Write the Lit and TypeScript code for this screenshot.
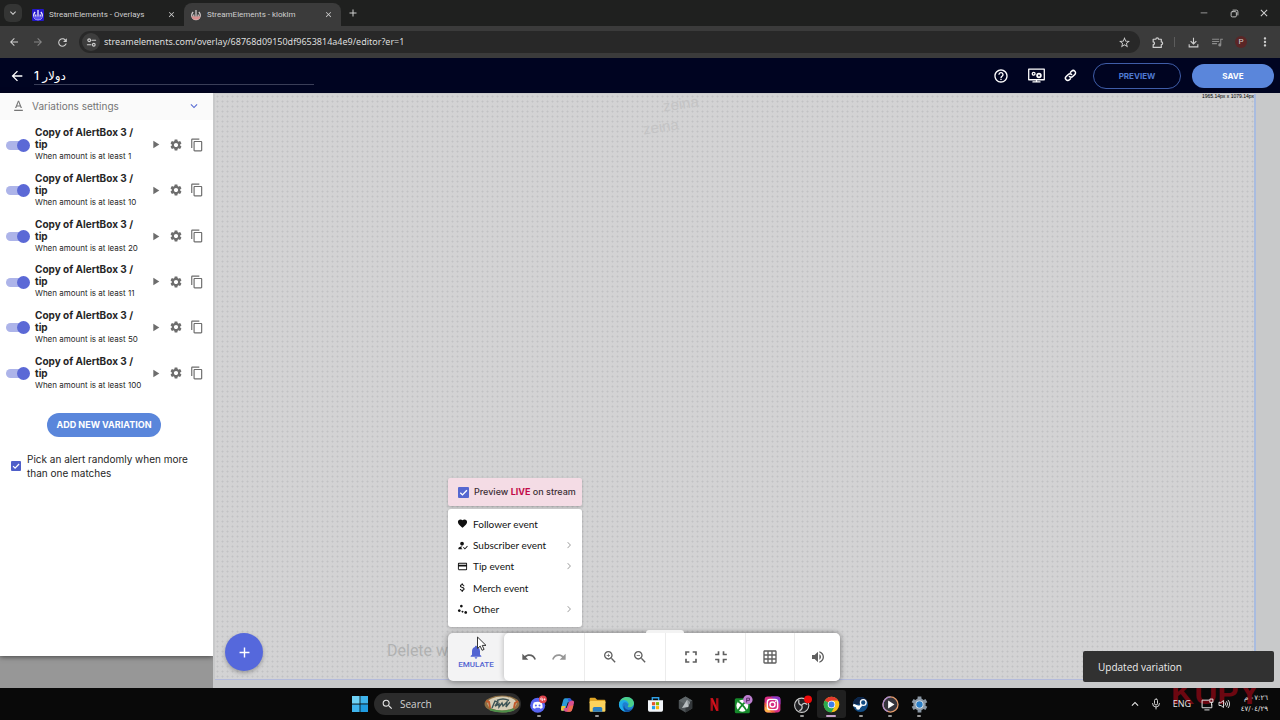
import { LitElement, html, css, svg, nothing } from "lit";
import { customElement, state } from "lit/decorators.js";

const PATHS: Record<string, string> = {
  back: "M20 11H7.83l5.59-5.59L12 4l-8 8 8 8 1.41-1.41L7.83 13H20v-2z",
  forward: "M12 4l-1.41 1.41L16.17 11H4v2h12.17l-5.58 5.59L12 20l8-8z",
  reload:
    "M17.65 6.35C16.2 4.9 14.21 4 12 4c-4.42 0-7.99 3.58-7.99 8s3.57 8 7.99 8c3.73 0 6.84-2.55 7.73-6h-2.08c-.82 2.33-3.04 4-5.65 4-3.31 0-6-2.69-6-6s2.69-6 6-6c1.66 0 3.14.69 4.22 1.78L13 11h7V4l-2.35 2.35z",
  close: "M19 6.41L17.59 5 12 10.59 6.41 5 5 6.41 10.59 12 5 17.59 6.41 19 12 13.41 17.59 19 19 17.59 13.41 12z",
  plus: "M19 13h-6v6h-2v-6H5v-2h6V5h2v6h6v2z",
  chevronDown: "M7.41 8.59L12 13.17l4.59-4.58L18 10l-6 6-6-6 1.41-1.41z",
  chevronUp: "M7.41 15.41L12 10.83l4.59 4.58L18 14l-6-6-6 6z",
  chevronRight: "M9.2 4.500l-1.200 1.200 6.300 6.300-6.300 6.300 1.200 1.200 7.500-7.500z",
  star: "M22 9.24l-7.19-.62L12 2 9.19 8.63 2 9.24l5.46 4.73L5.82 21 12 17.27 18.18 21l-1.63-7.03L22 9.24zM12 15.4l-3.76 2.27 1-4.28-3.32-2.88 4.38-.38L12 6.1l1.71 4.04 4.38.38-3.32 2.88 1 4.28L12 15.4z",
  more: "M12 8c1.1 0 2-.9 2-2s-.9-2-2-2-2 .9-2 2 .9 2 2 2zm0 2c-1.1 0-2 .9-2 2s.9 2 2 2 2-.9 2-2-.9-2-2-2zm0 6c-1.1 0-2 .9-2 2s.9 2 2 2 2-.9 2-2-.9-2-2-2z",
  queue: "M2 5h13v2H2zM2 9h13v2H2zM2 13h9v2H2zM17 5h5v2h-3v9.5a2.8 2.8 0 1 1-2-2.7z",
  download: "M11 3h2v9.2l3.6-3.6L18 10l-6 6-6-6 1.4-1.4 3.6 3.6zM3 15h2v4h14v-4h2v6H3z",
  help: "M11 18h2v-2h-2v2zm1-16C6.48 2 2 6.48 2 12s4.48 10 10 10 10-4.48 10-10S17.52 2 12 2zm0 18c-4.41 0-8-3.59-8-8s3.59-8 8-8 8 3.59 8 8-3.59 8-8 8zm0-14c-2.21 0-4 1.79-4 4h2c0-1.1.9-2 2-2s2 .9 2 2c0 2-3 1.75-3 5h2c0-2.25 3-2.5 3-5 0-2.21-1.79-4-4-4z",
  play: "M8 5v14l11-7z",
  gear: "M19.14 12.94c.04-.3.06-.61.06-.94s-.02-.64-.07-.94l2.03-1.58c.18-.14.23-.41.12-.61l-1.92-3.32c-.12-.22-.37-.29-.59-.22l-2.39.96c-.5-.38-1.03-.7-1.62-.94l-.36-2.54c-.04-.24-.24-.41-.48-.41h-3.84c-.24 0-.43.17-.47.41l-.36 2.54c-.59.24-1.13.57-1.62.94l-2.39-.96c-.22-.08-.47 0-.59.22L2.74 8.87c-.12.21-.08.47.12.61l2.03 1.58c-.05.3-.09.63-.09.94s.02.64.07.94l-2.03 1.58c-.18.14-.23.41-.12.61l1.92 3.32c.12.22.37.29.59.22l2.39-.96c.5.38 1.03.7 1.62.94l.36 2.54c.05.24.24.41.48.41h3.84c.24 0 .44-.17.47-.41l.36-2.54c.59-.24 1.13-.56 1.62-.94l2.39.96c.22.08.47 0 .59-.22l1.92-3.32c.12-.22.07-.47-.12-.61l-2.01-1.58zM12 15.6c-1.98 0-3.6-1.62-3.6-3.6s1.62-3.6 3.6-3.6 3.6 1.62 3.6 3.6-1.62 3.6-3.6 3.6z",
  copy: "M16 1H4c-1.1 0-2 .9-2 2v14h2V3h12V1zm3 4H8c-1.1 0-2 .9-2 2v14c0 1.1.9 2 2 2h11c1.1 0 2-.9 2-2V7c0-1.1-.9-2-2-2zm0 16H8V7h11v14z",
  textFormat: "M4 20v2h16v-2H4zm5-6h6l1 2.500h2.400L13 3h-2L5.600 16.500H8L9 14zm3-8.300L14.200 12H9.800L12 5.700z",
  heart: "M12 21.35l-1.45-1.32C5.4 15.36 2 12.28 2 8.5 2 5.42 4.42 3 7.5 3c1.74 0 3.41.81 4.5 2.09C13.09 3.81 14.76 3 16.5 3 19.58 3 22 5.42 22 8.5c0 3.78-3.4 6.86-8.55 11.54L12 21.35z",
  subscriber: "M11 12c2.21 0 4-1.79 4-4s-1.79-4-4-4-4 1.79-4 4 1.79 4 4 4zm6.2 8.7L13.1 16.6l1.4-1.4 2.7 2.7 4.9-5.2 1.4 1.4zM9 17l3-2.95c-.4-.05-.7-.05-1-.05-2.67 0-8 1.34-8 4v2h9l-3-3z",
  card: "M20 4H4c-1.11 0-1.99.89-1.99 2L2 18c0 1.11.89 2 2 2h16c1.11 0 2-.89 2-2V6c0-1.11-.89-2-2-2zm0 14H4v-6h16v6zm0-10H4V6h16v2z",
  dollar: "M11.8 10.9c-2.27-.59-3-1.2-3-2.15 0-1.09 1.01-1.85 2.7-1.85 1.78 0 2.44.85 2.5 2.1h2.21c-.07-1.72-1.12-3.3-3.21-3.81V3h-3v2.16c-1.94.42-3.5 1.68-3.5 3.61 0 2.31 1.91 3.46 4.7 4.13 2.5.6 3 1.48 3 2.41 0 .69-.49 1.79-2.7 1.79-2.06 0-2.87-.92-2.98-2.1h-2.2c.12 2.19 1.76 3.42 3.68 3.83V21h3v-2.15c1.95-.37 3.5-1.5 3.5-3.55 0-2.84-2.43-3.81-4.7-4.4z",
  dots: "M9.500 1.500a3 3 0 1 0 .01 0zM5 11.500a3 3 0 1 0 .01 0zM12 14.500a2 2 0 1 0 .01 0zM19 15.500a3 3 0 1 0 .01 0z",
  bell: "M12 22c1.1 0 2-.9 2-2h-4c0 1.1.89 2 2 2zm6-6v-5c0-3.07-1.64-5.64-4.5-6.32V4c0-.83-.67-1.5-1.5-1.5s-1.5.67-1.5 1.5v.68C7.63 5.36 6 7.92 6 11v5l-2 2v1h16v-1l-2-2z",
  undo: "M12.5 8c-2.65 0-5.05.99-6.9 2.6L2 7v9h9l-3.62-3.62c1.39-1.16 3.16-1.88 5.12-1.88 3.54 0 6.55 2.31 7.6 5.5l2.37-.78C21.08 11.03 17.15 8 12.5 8z",
  redo: "M18.4 10.6C16.55 8.99 14.15 8 11.5 8c-4.65 0-8.58 3.03-9.96 7.22L3.9 16c1.05-3.19 4.05-5.5 7.6-5.5 1.95 0 3.73.72 5.12 1.88L13 16h9V7l-3.6 3.6z",
  zoomIn: "M15.5 14h-.79l-.28-.27C15.41 12.59 16 11.11 16 9.5 16 5.91 13.09 3 9.5 3S3 5.91 3 9.5 5.91 16 9.5 16c1.61 0 3.09-.59 4.23-1.57l.27.28v.79l5 4.99L20.49 19l-4.99-5zm-6 0C7.01 14 5 11.99 5 9.5S7.01 5 9.5 5 14 7.01 14 9.5 11.99 14 9.5 14zm.5-7H9v2H7v1h2v2h1v-2h2V9h-2V7z",
  zoomOut: "M15.5 14h-.79l-.28-.27C15.41 12.59 16 11.11 16 9.5 16 5.91 13.09 3 9.5 3S3 5.91 3 9.5 5.91 16 9.5 16c1.61 0 3.09-.59 4.23-1.57l.27.28v.79l5 4.99L20.49 19l-4.99-5zm-6 0C7.01 14 5 11.99 5 9.5S7.01 5 9.5 5 14 7.01 14 9.5 11.99 14 9.5 14zM7 9h5v1H7z",
  expand: "M7 14H5v5h5v-2H7v-3zm-2-4h2V7h3V5H5v5zm12 7h-3v2h5v-5h-2v3zM14 5v2h3v3h2V5h-5z",
  shrink: "M5 16h3v3h2v-5H5v2zm3-8H5v2h5V5H8v3zm6 11h2v-3h3v-2h-5v5zm2-11V5h-2v5h5V8h-3z",
  grid: "M20 2H4c-1.1 0-2 .9-2 2v16c0 1.1.9 2 2 2h16c1.1 0 2-.9 2-2V4c0-1.1-.9-2-2-2zM8 20H4v-4h4v4zm0-6H4v-4h4v4zm0-6H4V4h4v4zm6 12h-4v-4h4v4zm0-6h-4v-4h4v4zm0-6h-4V4h4v4zm6 12h-4v-4h4v4zm0-6h-4v-4h4v4zm0-6h-4V4h4v4z",
  volume: "M3 9v6h4l5 5V4L7 9H3zm13.5 3c0-1.77-1.02-3.29-2.5-4.03v8.05c1.48-.73 2.5-2.25 2.5-4.02zM14 3.23v2.06c2.89.86 5 3.54 5 6.71s-2.11 5.85-5 6.71v2.06c4.01-.91 7-4.49 7-8.77s-2.99-7.86-7-8.77z",
  minimize: "M4 11h16v1.6H4z",
  search: "M15.5 14h-.79l-.28-.27A6.47 6.47 0 0 0 16 9.5 6.5 6.5 0 1 0 9.5 16c1.61 0 3.09-.59 4.23-1.57l.27.28v.79l5 4.99L20.49 19l-4.99-5zm-6 0C7.01 14 5 11.99 5 9.5S7.01 5 9.5 5 14 7.01 14 9.5 11.99 14 9.5 14z",
};

const icon = (name: string, size = 16) =>
  html`<svg class="icon" width=${size} height=${size} viewBox="0 0 24 24" fill="currentColor" aria-hidden="true"><path d=${PATHS[name]}></path></svg>`;

const lineIcon = (body: unknown, size: number, stroke = 2) =>
  html`<svg class="icon" width=${size} height=${size} viewBox="0 0 24 24" fill="none" stroke="currentColor" stroke-width=${stroke} stroke-linecap="round" stroke-linejoin="round" aria-hidden="true">${body}</svg>`;

const check = html`<svg class="tick" viewBox="0 0 12 12" fill="none" stroke="#fff" stroke-width="1.5" aria-hidden="true"><path d="M2.5 6.2l2.4 2.4 4.8-5"></path></svg>`;

const brandMark = (bg: string, ink: string, base: string) =>
  html`<svg class="icon" width="12" height="12" viewBox="0 0 12 12" aria-hidden="true">
    <rect width="12" height="12" rx="1" fill=${bg}></rect>
    <path d="M3.2 3A4.300 4.300 0 1 0 8.800 3" fill="none" stroke=${ink} stroke-width="1.2"></path>
    <path d="M1.500 7.200h9a4.600 4.600 0 0 1-9 0z" fill=${base}></path>
    <path d="M6 1v6.400M3.800 5.500v2M8.200 5.500v2" stroke=${ink} stroke-width="1.2"></path>
  </svg>`;

const APPS: { name: string; running?: boolean; active?: boolean; art: unknown }[] = [
  {
    name: "Discord", running: true,
    art: svg`<circle cx="11" cy="13" r="9.500" fill="#5865f2"/><path d="M6 9.500q5-2 10 0 1.600 3.500 1.200 6.500-1.600 1.300-3 1.400l-.7-1.200h-5l-.7 1.200q-1.400-.1-3-1.400-.4-3 1.200-6.500z" fill="#fff"/><circle cx="8.700" cy="13.300" r="1.300" fill="#5865f2"/><circle cx="13.300" cy="13.300" r="1.300" fill="#5865f2"/><circle cx="17.500" cy="5.500" r="5" fill="#e0464e"/><circle cx="15.800" cy="5" r="1.200" fill="none" stroke="#fff" stroke-width=".9"/><path d="M17 5.500v2.200M18.200 5.500h2.600M19.500 4.200v2.600" stroke="#fff" stroke-width=".9"/>`,
  },
  {
    name: "Copilot",
    art: svg`<path d="M9 4h5q2 0 2.600 2l.8 3h-5l-3 9q-.7 2-2.600 2H6q-3 0-2-4l2.500-9.500Q7.200 4 9 4z" fill="#2a9bd8"/><path d="M4.500 14h5l-1.200 4q-.7 2-2.300 2-3 0-2-4z" fill="#e8c53a"/><path d="M15 21h-5q-2 0-2.600-2l-.6-2 4.200-1 2.600-7q.6-2 2.600-2H18q3 0 2 4l-2.500 8Q17 21 15 21z" fill="#d9508f"/><path d="M12.400 4H15q1.400 0 2 2l.5 1.800q-3-.4-3.900 1.700z" fill="#3457d5"/><path d="M19.600 13l-1.800 6q-.8 2-2.800 2h-5q2 0 2.600-2l1.400-5z" fill="#ee6c4d"/>`,
  },
  {
    name: "File Explorer", running: true,
    art: svg`<path d="M2 5q0-1.500 1.500-1.500h5.500l2.500 2.500h9q1.500 0 1.500 1.500v3H2z" fill="#e0a526"/><rect x="2" y="7.500" width="20" height="13.500" rx="1.500" fill="#fbd25b"/><path d="M6 21v-4q0-2 2-2h8q2 0 2 2v4z" fill="#2b7fc0"/>`,
  },
  {
    name: "Edge",
    art: svg`<circle cx="12" cy="12" r="9.500" fill="#1f7fd0"/><path d="M2.500 11C4 5 8 2.500 12.500 2.500c5.500 0 9 4 9 8 0 3-2.500 5-5.500 5-2.500 0-3-1-2-2 1.300-1.800.3-5-3-5-4 0-8 1-8.500 2.500z" fill="#4bd08b"/><path d="M2.500 11C4 7 7 6 10 6.500c3 .5 5 3 4.300 6-1-3-3.300-4-5.300-3.200-3 1.200-3.200 7 2 11.500-5-.5-9-4.500-8.500-9.800z" fill="#1dabe8"/><path d="M9.200 13c-.5 5 5 7.500 10.500 4.500-2 3-5 4-8.700 3.500-3-2-3.500-5.500-1.800-8z" fill="#0c4f9e"/>`,
  },
  {
    name: "Microsoft Store",
    art: svg`<path d="M8 7V3.500h8V7" fill="none" stroke="#2f9fe5" stroke-width="1.800"/><path d="M2.500 6.500h19V19q0 2-2 2h-15q-2 0-2-2z" fill="#f3f6fa"/><path d="M7.500 9h4v4h-4z" fill="#e3572c"/><path d="M12.500 9h4v4h-4z" fill="#7fba00"/><path d="M7.500 14h4v4h-4z" fill="#1f9fe8"/><path d="M12.500 14h4v4h-4z" fill="#fbb90e"/>`,
  },
  {
    name: "Cube",
    art: svg`<path d="M12 2l8.500 5v10L12 22l-8.500-5V7z" fill="#4d5356"/><path d="M12 2l8.500 5L12 12 3.500 7z" fill="#5e6568"/><path d="M12 12l8.500-5v10L12 22z" fill="#34383b"/><path d="M14 6l3.500 3-2 6-8 1.500z" fill="#b9bfc2"/><path d="M14 6l3.500 3-2 6z" fill="#848b8e"/>`,
  },
  {
    name: "Netflix",
    art: svg`<path d="M7 4h3v16H7z" fill="#a60d17"/><path d="M14 4h3v16h-3z" fill="#a60d17"/><path d="M7 4h3l7 16h-3z" fill="#d3121c"/>`,
  },
  {
    name: "Xbox",
    art: svg`<rect x="1" y="4" width="19" height="19" rx="2" fill="#16892b"/><circle cx="10.500" cy="13.500" r="7.500" fill="#fff"/><path d="M5 8q5.500 3 11 12M16 8q-5.500 3-11 12" stroke="#16892b" stroke-width="2.200" fill="none"/><circle cx="17.500" cy="6" r="6" fill="#bd7fd0"/><path d="M16 9.500V4h3.500v2.800H16" stroke="#3d1d49" stroke-width="1" fill="none"/>`,
  },
  {
    name: "Instagram",
    art: svg`<rect x="2" y="2" width="20" height="20" rx="4" fill="#d62e83"/><path d="M2 13l10 9H6q-4 0-4-4z" fill="#fcb045"/><path d="M2 9l14 13h-5L2 14z" fill="#f2653a"/><path d="M10 2h8q4 0 4 4v6z" fill="#8a3ac8"/><rect x="5.500" y="5.500" width="13" height="13" rx="3.500" fill="none" stroke="#fff" stroke-width="1.800"/><circle cx="12" cy="12" r="3.200" fill="none" stroke="#fff" stroke-width="1.800"/><circle cx="16" cy="8" r="1" fill="#fff"/>`,
  },
  {
    name: "OBS Studio", running: true,
    art: svg`<circle cx="11" cy="13" r="9" fill="#202124" stroke="#c9c9c9" stroke-width="1.400"/><path d="M11 13q-5-1-3.500-6.500M11 13q2.500-4.500 7-1M11 13q2 4.500-3 7" stroke="#c9c9c9" stroke-width="1.600" fill="none"/><circle cx="19" cy="5.500" r="5" fill="#f00a0a"/>`,
  },
  {
    name: "Chrome", running: true, active: true,
    art: svg`<circle cx="12" cy="12" r="9.800" fill="#fbc116"/><path d="M12 12L3.500 7.100A9.800 9.800 0 0 1 20.500 7.100H12z" fill="#e33b2e"/><path d="M12 12L3.500 7.100A9.800 9.800 0 0 0 12 21.800l4-7.200z" fill="#2da94f"/><circle cx="12" cy="12" r="4.700" fill="#fff"/><circle cx="12" cy="12" r="3.700" fill="#3f7ee8"/>`,
  },
  {
    name: "Steam", running: true,
    art: svg`<circle cx="12" cy="12" r="9.500" fill="#124c84"/><path d="M2.500 12A9.500 9.500 0 0 1 12 2.500q6 0 8.500 5L12 11z" fill="#0c2447"/><circle cx="15.500" cy="9.500" r="3.600" fill="#124c84" stroke="#fff" stroke-width="1.700"/><path d="M2.800 12.500l7.500 3.100 3-3" stroke="#fff" stroke-width="2.800" fill="none"/><circle cx="9" cy="16" r="2.600" fill="#fff"/>`,
  },
  {
    name: "Media Player", running: true,
    art: svg`<circle cx="12" cy="12" r="9.500" fill="#35343c" stroke="#e39a6b" stroke-width="1.600"/><path d="M12 2.500a9.500 9.500 0 0 0-9.500 9.500 9.500 9.500 0 0 0 6 8.800" fill="none" stroke="#a58bd0" stroke-width="1.600"/><path d="M9 7v10l8-5z" fill="#fff"/>`,
  },
  {
    name: "Settings", running: true,
    art: svg`<g stroke="#8b98a5" stroke-width="4.800"><path d="M12 2v20M3.300 7l17.400 10M20.700 7L3.300 17"/></g><circle cx="12" cy="12" r="7.800" fill="#8b98a5"/><circle cx="12" cy="12" r="5" fill="#dfe8ee"/><circle cx="12" cy="12" r="4" fill="#2a7ec7"/>`,
  },
];

const MENU = [
  { label: "Follower event", glyph: "heart", more: false },
  { label: "Subscriber event", glyph: "subscriber", more: true },
  { label: "Tip event", glyph: "card", more: true },
  { label: "Merch event", glyph: "dollar", more: false },
  { label: "Other", glyph: "dots", more: true },
];

const reset = css`
  :host { display: block; box-sizing: border-box; }
  *, *::before, *::after { box-sizing: border-box; }
  button, input { font: inherit; color: inherit; margin: 0; padding: 0; border: 0; background: none; border-radius: 0; }
  button { display: inline-flex; align-items: center; justify-content: center; cursor: pointer; }
  input { outline: none; min-width: 0; }
  .icon { display: block; flex: none; }
`;

@customElement("browser-bar")
class BrowserBar extends LitElement {
  static styles = [reset, css`
    :host { font: 8px/14px Roboto, sans-serif; color: #cfcfcf; background: #1f201f; }
    .tabs { display: flex; align-items: flex-end; height: 26px; padding-left: 4px; }
    .list-tabs { width: 18px; height: 18px; border-radius: 6px; background: #343534; align-self: center; }
    .tab { display: flex; align-items: center; gap: 5px; height: 23px; padding: 0 8px 0 6px; border-radius: 8px 8px 0 0; }
    .tab.active { width: 157px; background: #3b3b3b; }
    .tab.idle { width: 162px; padding: 0 8px 0 10px; }
    .name { flex: 1; white-space: nowrap; }
    .new { width: 24px; height: 26px; }
    .window { display: flex; margin-left: auto; height: 26px; padding-right: 1px; }
    .window button { width: 30px; }
    .nav { display: flex; align-items: center; height: 32px; background: #3b3b3b; padding: 0 3px 0 2px; }
    .nav > button { width: 24px; height: 24px; }
    .nav > .dim { color: #858585; }
    .tools .dim { color: #8c8c8c; }
    .address { display: flex; align-items: center; flex: 1; height: 22px; margin-left: 5px; border-radius: 11px; background: #282828; padding: 0 9px 0 3px; }
    .site { width: 18px; height: 18px; border-radius: 9px; background: #3d3d3d; margin-right: 4px; }
    .address input { flex: 1; font: 9px/16px "Noto Sans", sans-serif; color: #dedede; }
    .tools { display: flex; align-items: center; padding-left: 5px; }
    .tools button { width: 24px; height: 24px; }
    .rule { width: 1px; height: 10px; background: #5c5c5c; margin: 0 6px 0 5px; }
    .avatar { width: 12px; height: 12px; border-radius: 6px; background: #5a2626; line-height: 12px; text-align: center; }
  `];

  render() {
    return html`
      <div class="tabs">
        <button class="list-tabs" aria-label="Search tabs">${icon("chevronDown", 12)}</button>
        <div class="tab idle">${brandMark("#2417c9", "#fff", "#5a4ff0")}<span class="name">StreamElements - Overlays</span><button aria-label="Close tab">${icon("close", 9)}</button></div>
        <div class="tab active">${brandMark("#3b3b3b", "#d9d2d2", "#d98f8f")}<span class="name">StreamElements - kloklm</span><button aria-label="Close tab">${icon("close", 9)}</button></div>
        <button class="new" aria-label="New tab">${icon("plus", 12)}</button>
        <div class="window">
          <button aria-label="Minimize">${icon("minimize", 10)}</button>
          <button aria-label="Restore">${lineIcon(svg`<rect x="3" y="7" width="14" height="14" rx="3"/><path d="M8 3h9q4 0 4 4v9"/>`, 9, 2.4)}</button>
          <button aria-label="Close">${icon("close", 12)}</button>
        </div>
      </div>
      <div class="nav">
        <button aria-label="Back">${icon("back", 12)}</button>
        <button class="dim" aria-label="Forward">${icon("forward", 12)}</button>
        <button aria-label="Reload">${icon("reload", 13)}</button>
        <div class="address">
          <button class="site" aria-label="Site information">${lineIcon(svg`<circle cx="7" cy="7" r="3"/><path d="M13 7h8M3 17h8"/><circle cx="17" cy="17" r="3"/>`, 11, 2.4)}</button>
          <input aria-label="Address" value="streamelements.com/overlay/68768d09150df9653814a4e9/editor?er=1" />
          <button aria-label="Bookmark">${icon("star", 13)}</button>
        </div>
        <div class="tools">
          <button aria-label="Extensions">${lineIcon(svg`<path d="M4 6h5a2.500 2.500 0 0 1 5 0h5v5a2.500 2.500 0 0 1 0 5v5H4v-5a2.500 2.500 0 0 0 0-5z"/>`, 13, 2.2)}</button>
          <span class="rule"></span>
          <button aria-label="Downloads">${icon("download", 13)}</button>
          <button class="dim" aria-label="Media">${icon("queue", 13)}</button>
          <button aria-label="Profile"><span class="avatar">P</span></button>
          <button aria-label="Menu">${icon("more", 14)}</button>
        </div>
      </div>`;
  }
}

@customElement("editor-header")
class EditorHeader extends LitElement {
  static styles = [reset, css`
    :host { display: flex; align-items: center; height: 35px; padding: 0 6px 0 9px; background: #000421; color: #fff; font: 700 8px/12px Inter, sans-serif; }
    .title { width: 280px; height: 18px; margin: 0 auto 0 9px; border-bottom: 1px solid #3a3e58; font: 500 12px/16px Inter, "DejaVu Sans", sans-serif; text-align: left; unicode-bidi: plaintext; }
    .tools { display: flex; align-items: center; gap: 19px; margin-right: 16px; }
    .pill { height: 24px; border-radius: 12px; }
    .preview { width: 88px; border: 1px solid #3f5da8; color: #4f79d2; margin-right: 11px; height: 26px; border-radius: 13px; }
    .save { width: 82px; background: #5a86db; }
  `];

  render() {
    return html`
      <button aria-label="Back to overlays">${icon("back", 16)}</button>
      <input class="title" aria-label="Overlay name" value="دولار 1" />
      <div class="tools">
        <button aria-label="Help">${icon("help", 16)}</button>
        <button aria-label="Display settings">${lineIcon(svg`<rect x="1" y="3" width="22" height="15"/><path d="M12 18v3M7 21h10"/><circle cx="8" cy="9.500" r="2"/><circle cx="15.500" cy="12" r="2.600" stroke-width="2.600"/>`, 17, 1.8)}</button>
        <button aria-label="Copy link">${lineIcon(svg`<path d="M10 14a4.200 4.200 0 0 0 6 0l4-4a4.200 4.200 0 0 0-6-6l-2 2M14 10a4.200 4.200 0 0 0-6 0l-4 4a4.200 4.200 0 0 0 6 6l2-2"/>`, 13, 2.8)}</button>
      </div>
      <button class="pill preview">PREVIEW</button>
      <button class="pill save">SAVE</button>`;
  }
}

@customElement("variations-panel")
class VariationsPanel extends LitElement {
  @state() private amounts = [1, 10, 20, 11, 50, 100];

  static styles = [reset, css`
    :host { background: #fff; color: #262626; font: 10px/14px Inter, sans-serif; box-shadow: 0 1px 5px #0008; }
    .head { display: flex; align-items: center; width: 100%; height: 27px; padding: 0 12px 2px; gap: 7px; background: #fafafa; color: #757575; text-align: left; }
    .head span { flex: 1; }
    .head .chev { color: #5b6ed3; display: flex; }
    .list { list-style: none; margin: 0; padding: 2px 9px 0 6px; display: grid; grid-auto-rows: 1fr; height: 276px; }
    .item { display: flex; align-items: center; gap: 5px; }
    .switch { position: relative; appearance: none; width: 24px; height: 14px; flex: none; }
    .switch::before { content: ""; display: block; width: 20px; height: 9px; margin-top: 3px; border-radius: 5px; background: #adb4e9; }
    .switch::after { content: ""; position: absolute; right: 0; top: 1px; width: 13px; height: 13px; border-radius: 50%; background: #5b69d6; }
    .switch:not(:checked)::after { right: auto; left: 0; background: #eee; }
    .text { flex: 1; min-width: 0; }
    .name { display: block; font-weight: 700; line-height: 12px; max-width: 104px; }
    .when { display: block; font-size: 8px; line-height: 13px; white-space: nowrap; }
    .acts { display: flex; gap: 7px; color: #6d6d6d; }
    .foot { display: grid; justify-items: center; padding: 17px 5px 0 0; }
    .add { height: 24px; border-radius: 12px; padding: 0 9px; background: #5a86db; color: #fff; font-weight: 700; font-size: 9px; white-space: nowrap; }
    .random { display: flex; align-items: center; gap: 6px; padding: 15px 16px 0 11px; cursor: pointer; }
    .box { position: relative; display: flex; width: 10px; height: 10px; flex: none; }
    .box input { appearance: none; width: 10px; height: 10px; background: #4f5fc9; border-radius: 1px; }
    .tick { position: absolute; inset: 0; }
  `];

  render() {
    return html`
      <button class="head">${icon("textFormat", 13)}<span>Variations settings</span><i class="chev">${icon("chevronDown", 14)}</i></button>
      <ul class="list">
        ${this.amounts.map((n, i) => html`
          <li class="item">
            <input class="switch" type="checkbox" role="switch" id="v${i}" checked />
            <label class="text" for="v${i}"><span class="name">Copy of AlertBox 3 / tip</span><span class="when">When amount is at least ${n}</span></label>
            <div class="acts">
              <button aria-label="Play">${icon("play", 13)}</button>
              <button aria-label="Settings">${icon("gear", 14)}</button>
              <button aria-label="Duplicate">${icon("copy", 14)}</button>
            </div>
          </li>`)}
      </ul>
      <div class="foot"><button class="add">ADD NEW VARIATION</button></div>
      <label class="random"><span class="box"><input type="checkbox" checked />${check}</span><span>Pick an alert randomly when more than one matches</span></label>`;
  }
}

@customElement("editor-stage")
class EditorStage extends LitElement {
  static styles = [reset, css`
    :host { position: relative; display: flex; padding: 1px 24px 8px 2px; background: #c8c9ca; font: 10px/14px Inter, sans-serif; }
    .canvas { position: relative; flex: 1; overflow: hidden; border-right: 2px solid #a9bce0; border-bottom: 1px solid #b4bbdb; background-color: #d3d3d4; background-image: radial-gradient(circle at center, #c1c2c4 0 0.8px, transparent 1.2px); background-size: 5px 5px; }
    .size { position: absolute; right: 0; top: 0; font: 500 5px/5px "Liberation Sans", sans-serif; color: #000; white-space: nowrap; }
    .ghost { position: absolute; color: #c4c4c5; font: 15px/16px "Liberation Sans", sans-serif; transform: rotate(-8deg); }
    .g1 { left: 448px; top: 2px; }
    .g2 { left: 428px; top: 25px; }
    .hint { position: absolute; left: 172px; bottom: 18px; font: 16px/20px Roboto, sans-serif; color: #b0b1b1; white-space: nowrap; }
    .fab { position: absolute; left: 12px; bottom: 17px; width: 38px; height: 38px; border-radius: 19px; background: #5568dc; color: #fff; box-shadow: 0 2px 4px #0004; }
    .dock { position: absolute; left: 235px; bottom: 7px; display: grid; gap: 6px; justify-items: start; }
    .popup { display: grid; grid-template-columns: minmax(0, 1fr); gap: 3px; width: 134px; }
    .live { display: flex; align-items: center; gap: 5px; height: 28px; padding-left: 10px; background: #f4dce5; color: #3c2f35; border-radius: 2px; font-weight: 500; font-size: 9px; box-shadow: 0 1px 3px #0003; white-space: nowrap; }
    .live b { color: #c20a49; }
    .box { position: relative; display: flex; width: 11px; height: 11px; flex: none; }
    .box input { appearance: none; width: 11px; height: 11px; background: #5567d0; border-radius: 1px; }
    .tick { position: absolute; inset: 0; }
    .menu { display: grid; grid-auto-rows: 1fr; margin: 0; padding: 4px 0 7px; height: 118px; list-style: none; background: #fff; border-radius: 3px; box-shadow: 0 1px 3px #0003; color: #111; font: 10px/14px Lato, sans-serif; }
    .menu button { width: 100%; height: 100%; padding: 0 8px 0 9px; gap: 5px; text-align: left; }
    .menu span { flex: 1; }
    .menu i { display: flex; color: #999; }
    .bar { position: relative; display: flex; height: 48px; border-radius: 5px; background: #f3f3f4; box-shadow: 0 1px 6px #0006; }
    .emulate { display: grid; align-content: center; justify-items: center; width: 56px; color: #5264d2; font: 500 8px/10px Roboto, sans-serif; }
    .groups { display: flex; background: #fff; border-radius: 5px; box-shadow: -1px 0 5px #0003; color: #5f5f5f; }
    .group { display: flex; align-items: center; justify-content: center; gap: 14px; width: 81px; border-left: 1px solid #ececec; }
    .group:first-child { border-left: 0; width: 80px; }
    .group.sizes { gap: 10px; width: 80px; }
    .group.one { width: 49px; }
    .group.last { width: 46px; }
    .handle { position: absolute; left: 198px; top: -3px; width: 38px; height: 3px; border-radius: 3px 3px 0 0; background: #f3f3f3; }
    .redo { color: #979797; }
    .cursor { position: absolute; left: 28px; top: 3px; }
    .toast { position: absolute; right: 6px; bottom: 6px; width: 191px; height: 31px; padding: 0 15px; display: flex; align-items: center; background: #313131; color: #eee; border-radius: 2px; font: 500 10px/14px "Open Sans", sans-serif; }
  `];

  render() {
    return html`
      <div class="canvas">
        <span class="ghost g1">zeina</span><span class="ghost g2">zeina</span>
        <span class="size">1965.14px x 1079.14px</span>
        <span class="hint">Delete widget</span>
      </div>
      <button class="fab" aria-label="Add widget">${icon("plus", 17)}</button>
      <div class="dock">
        <div class="popup">
          <label class="live"><span class="box"><input type="checkbox" checked />${check}</span><span>Preview <b>LIVE</b> on stream</span></label>
          <ul class="menu">
            ${MENU.map((m) => html`<li><button>${icon(m.glyph, 11)}<span>${m.label}</span>${m.more ? html`<i>${icon("chevronRight", 10)}</i>` : nothing}</button></li>`)}
          </ul>
        </div>
        <div class="bar">
          <span class="handle"></span>
          <button class="emulate">${icon("bell", 16)}EMULATE</button>
          <div class="groups">
            <div class="group"><button aria-label="Undo">${icon("undo", 16)}</button><button class="redo" aria-label="Redo">${icon("redo", 16)}</button></div>
            <div class="group"><button aria-label="Zoom in">${icon("zoomIn", 16)}</button><button aria-label="Zoom out">${icon("zoomOut", 16)}</button></div>
            <div class="group sizes"><button aria-label="Full screen">${icon("expand", 20)}</button><button aria-label="Fit">${icon("shrink", 20)}</button></div>
            <div class="group one"><button aria-label="Grid">${icon("grid", 16)}</button></div>
            <div class="group one last"><button aria-label="Volume">${icon("volume", 16)}</button></div>
          </div>
          <svg class="cursor" width="12" height="16" viewBox="0 0 12 16" aria-hidden="true"><path d="M1.500 1v11.500l2.700-2.400 1.900 4.200 2-.9-1.900-4h3.800z" fill="#fff" stroke="#333"></path></svg>
        </div>
      </div>
      <div class="toast" role="status">Updated variation</div>`;
  }
}

@customElement("task-bar")
class TaskBar extends LitElement {
  static styles = [reset, css`
    :host { position: relative; display: grid; grid-template-columns: 1fr auto 1fr; align-items: center; height: 32px; background: #090909; color: #e6e6e6; font: 10px/14px "Open Sans", sans-serif; overflow: hidden; }
    .main { grid-column: 2; display: flex; align-items: center; }
    .start { width: 28px; height: 32px; }
    .search { display: flex; align-items: center; gap: 6px; width: 147px; height: 22px; border-radius: 11px; background: #2b2b2b; padding: 0 1px 0 7px; margin-right: 3px; }
    .search input { flex: 1; }
    .search input::placeholder { color: #d2d2d2; opacity: 1; }
    .apps { display: grid; grid-template-columns: repeat(14, 1fr); width: 410px; }
    .app { position: relative; height: 28px; border-radius: 3px; }
    .app.active { background: #202020; }
    .app.running::after { content: ""; position: absolute; bottom: 1px; left: 50%; width: 4px; height: 2px; margin-left: -2px; border-radius: 1px; background: #999; }
    .app.active::after { width: 10px; margin-left: -5px; background: #c9a3cb; }
    .tray { grid-column: 3; justify-self: end; position: relative; display: flex; align-items: center; padding-right: 12px; }
    .tray button { height: 28px; }
    .up { width: 22px; }
    .mic { width: 20px; }
    .lang { width: 32px; font-size: 9px; }
    .net { width: 18px; }
    .vol { width: 16px; }
    .clock { width: 36px; font: 7px/11px "DejaVu Sans", sans-serif; text-align: right; white-space: nowrap; }
    .clock time { display: block; }
    .mark { position: absolute; right: 20px; top: -11px; font: 700 32px/32px "Liberation Sans", sans-serif; color: #6c0711; }
  `];

  render() {
    return html`
      <span class="mark">KUPY</span>
      <div class="main">
        <button class="start" aria-label="Start"><svg class="icon" width="16" height="16" viewBox="0 0 16 16" fill="#3fb4ec"><path d="M0 0h7.600v7.600H0z" fill="#6fd2f5"></path><path d="M8.400 0H16v7.600H8.400zM0 8.400h7.600V16H0z"></path><path d="M8.400 8.400H16V16H8.400z" fill="#1f9be0"></path></svg></button>
        <label class="search">${icon("search", 13)}<input type="search" aria-label="Search" placeholder="Search" />
          <svg class="icon" width="36" height="18" viewBox="0 0 36 18" aria-hidden="true">
            <ellipse cx="18" cy="9" rx="17.500" ry="8.500" fill="#8b6d42"></ellipse><ellipse cx="18" cy="8.500" rx="14.500" ry="7" fill="#d6cdb6"></ellipse>
            <path d="M2 6l3 1 1 6M34 6l-3 2-1 5" stroke="#c05a2c" stroke-width="2" fill="none"></path>
            <path d="M6 14.500q12 4 24 0" stroke="#4d8f4a" stroke-width="2" fill="none"></path>
            <path d="M8 13l3-7 3 1-3 4 4-2v3l3-4 1 3 4-4-1 5 4-5M13 5.500q6-3 12 0" stroke="#3c5355" stroke-width="1.400" fill="none"></path>
          </svg></label>
        <div class="apps">
          ${APPS.map((a) => html`<button class="app ${a.running ? "running" : ""} ${a.active ? "active" : ""}" aria-label=${a.name}><svg class="icon" width="19" height="19" viewBox="0 0 24 24">${a.art}</svg></button>`)}
        </div>
      </div>
      <div class="tray">
        <button class="up" aria-label="Hidden icons">${icon("chevronUp", 14)}</button>
        <button class="mic" aria-label="Microphone">${lineIcon(svg`<rect x="9" y="2" width="6" height="12" rx="3"/><path d="M5 11a7 7 0 0 0 14 0M12 18v4"/>`, 12, 1.8)}</button>
        <button class="lang">ENG</button>
        <button class="net" aria-label="Network">${lineIcon(svg`<path d="M14 4H2v14h18v-6M7 22h8"/><rect x="17" y="2" width="5" height="6"/><path d="M19.500 8v5"/>`, 13, 1.8)}</button>
        <button class="vol" aria-label="Volume">${lineIcon(svg`<path d="M2 9v6h4l5 4V5L6 9zM14.500 9.500q2 2.500 0 5M17.500 7q4 5 0 10M20.500 4.500q6 7.500 0 15"/>`, 12, 1.8)}</button>
        <div class="clock"><time>٠٧:٢٦ م</time><time>٤٧/٠٤/٢٩</time></div>
      </div>`;
  }
}

@customElement("app-root")
class AppRoot extends LitElement {
  static styles = [reset, css`
    :host { display: flex; flex-direction: column; min-height: 100vh; background: #979797; }
    .work { flex: 1; display: grid; grid-template-columns: 213px 1fr; }
    .side { display: flex; flex-direction: column; padding-bottom: 32px; position: relative; background: #979797; }
    .side variations-panel { flex: 1; }
  `];

  render() {
    return html`
      <browser-bar></browser-bar>
      <editor-header></editor-header>
      <div class="work">
        <div class="side"><variations-panel></variations-panel></div>
        <editor-stage></editor-stage>
      </div>
      <task-bar></task-bar>`;
  }
}
